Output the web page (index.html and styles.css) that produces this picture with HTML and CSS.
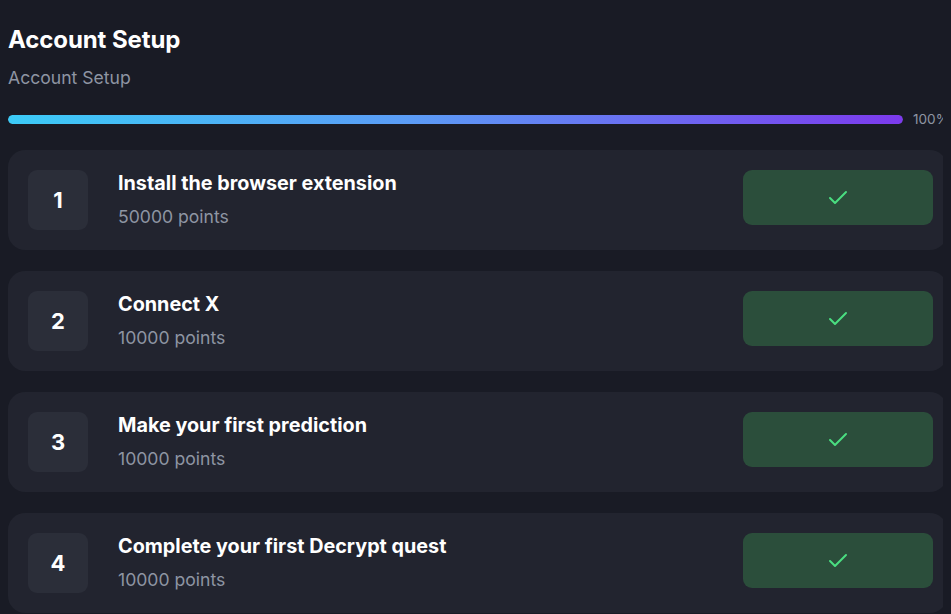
FILE: index.html
```html
<!DOCTYPE html>
<html lang="en">
<head>
<meta charset="utf-8">
<title>Account Setup</title>
<link rel="stylesheet" href="styles.css">
</head>
<body>
<main class="setup">
  <h1 class="title">Account Setup</h1>
  <p class="subtitle">Account Setup</p>
  <div class="progress-row">
    <div class="progress-track"><div class="progress-fill" style="width:100%"></div></div>
    <span class="progress-label">100%</span>
  </div>
  <ul class="tasks">
    <li class="task">
      <div class="task-num">1</div>
      <div class="task-info">
        <div class="task-title">Install the browser extension</div>
        <div class="task-points">50000 points</div>
      </div>
      <button class="task-done" aria-label="Completed"><svg width="24" height="24" viewBox="0 0 24 24" fill="none" stroke="currentColor" stroke-width="2" stroke-linecap="round" stroke-linejoin="round"><polyline points="20 6 9 17 4 12"/></svg></button>
    </li>
    <li class="task">
      <div class="task-num">2</div>
      <div class="task-info">
        <div class="task-title">Connect X</div>
        <div class="task-points">10000 points</div>
      </div>
      <button class="task-done" aria-label="Completed"><svg width="24" height="24" viewBox="0 0 24 24" fill="none" stroke="currentColor" stroke-width="2" stroke-linecap="round" stroke-linejoin="round"><polyline points="20 6 9 17 4 12"/></svg></button>
    </li>
    <li class="task">
      <div class="task-num">3</div>
      <div class="task-info">
        <div class="task-title">Make your first prediction</div>
        <div class="task-points">10000 points</div>
      </div>
      <button class="task-done" aria-label="Completed"><svg width="24" height="24" viewBox="0 0 24 24" fill="none" stroke="currentColor" stroke-width="2" stroke-linecap="round" stroke-linejoin="round"><polyline points="20 6 9 17 4 12"/></svg></button>
    </li>
    <li class="task">
      <div class="task-num">4</div>
      <div class="task-info">
        <div class="task-title">Complete your first Decrypt quest</div>
        <div class="task-points">10000 points</div>
      </div>
      <button class="task-done" aria-label="Completed"><svg width="24" height="24" viewBox="0 0 24 24" fill="none" stroke="currentColor" stroke-width="2" stroke-linecap="round" stroke-linejoin="round"><polyline points="20 6 9 17 4 12"/></svg></button>
    </li>
  </ul>
</main>
</body>
</html>
```

FILE: styles.css
```css
html {
  overflow: hidden;
  background: #191b25;
}
body {
  margin: 8px;
  background: #191b25;
  color: #ffffff;
  font-family: Inter, "Noto Sans", sans-serif;
}
.setup {
  width: 939px;
  padding-top: 16px;
}
.title {
  margin: 0;
  font-size: 24px;
  line-height: 32px;
  font-weight: 700;
  letter-spacing: -0.1px;
}
.subtitle {
  margin: 10px 0 0;
  font-size: 17.6px;
  line-height: 24px;
  color: #8e95a3;
}
.progress-row {
  display: flex;
  align-items: center;
  gap: 10px;
  height: 20px;
  margin-top: 19px;
  white-space: nowrap;
}
.progress-track {
  flex: none;
  width: 895px;
  height: 9px;
  border-radius: 5px;
  background: #2b2e39;
  overflow: hidden;
}
.progress-fill {
  height: 100%;
  border-radius: 5px;
  background: linear-gradient(90deg, #3ccbf7 0%, #5b9cf6 45%, #7c3aed 100%);
}
.progress-label {
  font-size: 13.6px;
  color: #8e95a3;
}
.tasks {
  list-style: none;
  margin: 21px 0 0;
  padding: 0;
  display: flex;
  flex-direction: column;
  gap: 21px;
}
.task {
  display: flex;
  align-items: flex-start;
  padding: 20px 14px 20px 20px;
  height: 60px;
  border-radius: 17px;
  background: #22242f;
}
.task-num {
  width: 60px;
  height: 60px;
  flex: none;
  display: flex;
  align-items: center;
  justify-content: center;
  border-radius: 9px;
  background: #2b2e39;
  font-size: 22px;
  font-weight: 700;
}
.task-info {
  flex: 1;
  margin-left: 30px;
}
.task-title {
  margin-top: -1px;
  font-size: 19.8px;
  line-height: 28px;
  font-weight: 700;
}
.task-points {
  margin-top: 7px;
  font-size: 17.6px;
  line-height: 26px;
  color: #8e95a3;
}
.task-done {
  width: 190px;
  height: 55px;
  flex: none;
  border: 0;
  border-radius: 9px;
  background: #2b4e3b;
  color: #4ade80;
  display: flex;
  align-items: center;
  justify-content: center;
  padding: 0;
}
.task-done svg {
  width: 24px;
  height: 24px;
}
```
